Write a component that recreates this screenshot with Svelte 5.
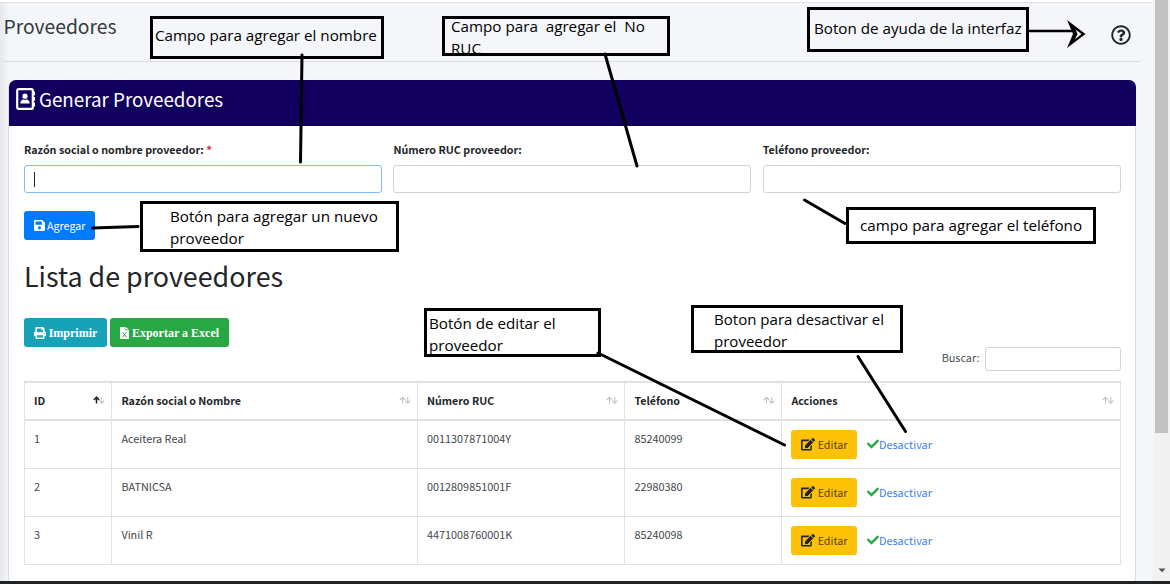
<script>
  const rows = [
    { id: 1, name: 'Aceitera Real', ruc: '0011307871004Y', phone: '85240099' },
    { id: 2, name: 'BATNICSA', ruc: '0012809851001F', phone: '22980380' },
    { id: 3, name: 'Vinil R', ruc: '4471008760001K', phone: '85240098' }
  ];
  const columns = ['ID', 'Razón social o Nombre', 'Número RUC', 'Teléfono', 'Acciones'];
</script>

<div class="window">
  <div class="page">
    <div class="topline"></div>
    <header class="title">
      <h1>Proveedores</h1>
      <svg class="help" viewBox="0 0 512 512"><path d="M256 8C119.043 8 8 119.083 8 256c0 136.997 111.043 248 248 248s248-111.003 248-248C504 119.083 392.957 8 256 8zm0 448c-110.532 0-200-89.431-200-200 0-110.495 89.472-200 200-200 110.491 0 200 89.471 200 200 0 110.53-89.431 200-200 200zm107.244-255.2c0 67.052-72.421 68.084-72.421 92.863V300c0 6.627-5.373 12-12 12h-45.647c-6.627 0-12-5.373-12-12v-8.659c0-35.745 27.1-50.034 47.579-61.516 17.561-9.845 28.324-16.541 28.324-29.579 0-17.246-21.999-28.693-39.784-28.693-23.189 0-33.894 10.977-48.942 29.969-4.057 5.12-11.46 6.071-16.666 2.124l-27.824-21.098c-5.107-3.872-6.251-11.066-2.644-16.363C184.846 131.491 214.94 112 261.794 112c49.071 0 101.45 38.304 101.45 88.8zM298 368c0 23.159-18.841 42-42 42s-42-18.841-42-42 18.841-42 42-42 42 18.841 42 42z" /></svg>
    </header>

    <section class="card">
      <div class="card-head">
        <svg class="book" viewBox="0 0 20 23">
          <rect x="1.2" y="1.2" width="15.6" height="19.6" rx="1.4" fill="none" stroke="#fff" stroke-width="2.2" />
          <circle cx="9" cy="8.2" r="2.6" fill="#fff" />
          <path d="M4.3 15.6c0-2.6 1.7-4 3.2-4 .9.5 2.1.5 3 0 1.500 0 3.200 1.400 3.200 4z" fill="#fff" />
          <path d="M17.500 3.500h1.500v3.800H17.500zM17.500 9h1.500v3.800H17.500zM17.500 14.600h1.500v3.800H17.500z" fill="#fff" />
        </svg>
        <span>Generar Proveedores</span>
      </div>

      <div class="card-body">
        <div class="fields">
          <div class="field">
            <label for="name">Razón social o nombre proveedor: <b>*</b></label>
            <div id="name" class="input active"><i></i></div>
          </div>
          <div class="field">
            <label for="ruc">Número RUC proveedor:</label>
            <div id="ruc" class="input"></div>
          </div>
          <div class="field">
            <label for="phone">Teléfono proveedor:</label>
            <div id="phone" class="input"></div>
          </div>
        </div>

        <button class="btn add">
          <svg width="11" height="13" viewBox="0 0 448 512"><path d="M433.941 129.941l-83.882-83.882A48 48 0 0 0 316.118 32H48C21.490 32 0 53.490 0 80v352c0 26.510 21.490 48 48 48h352c26.510 0 48-21.490 48-48V163.882a48 48 0 0 0-14.059-33.941zM224 416c-35.346 0-64-28.654-64-64 0-35.346 28.654-64 64-64s64 28.654 64 64c0 35.346-28.654 64-64 64zm96-304.520V212c0 6.627-5.373 12-12 12H76c-6.627 0-12-5.373-12-12V108c0-6.627 5.373-12 12-12h228.520c3.183 0 6.235 1.264 8.485 3.515l3.480 3.480A11.996 11.996 0 0 1 320 111.480z" /></svg>
          <span>Agregar</span>
        </button>

        <h2>Lista de proveedores</h2>

        <div class="exports">
          <button class="btn print">
            <svg width="12" height="12" viewBox="0 0 512 512"><path d="M448 192V77.250c0-8.490-3.370-16.620-9.370-22.630L393.370 9.370c-6-6-14.140-9.370-22.630-9.370H96C78.330 0 64 14.330 64 32v160c-35.350 0-64 28.650-64 64v112c0 8.840 7.160 16 16 16h48v96c0 17.670 14.330 32 32 32h320c17.670 0 32-14.330 32-32v-96h48c8.840 0 16-7.160 16-16V256c0-35.350-28.650-64-64-64zm-64 256H128v-96h256v96zm0-224H128V64h192v48c0 8.840 7.160 16 16 16h48v96zm48 72c-13.250 0-24-10.750-24-24 0-13.260 10.750-24 24-24s24 10.740 24 24c0 13.250-10.750 24-24 24z" /></svg>
            <span>Imprimir</span>
          </button>
          <button class="btn excel">
            <svg width="9" height="12" viewBox="0 0 9 12"><path d="M.6 0H5.500v3.200H9v8.200a.6.6 0 0 1-.6.6H.6a.6.6 0 0 1-.6-.6V.6A.6.6 0 0 1 .6 0zM6.200 0 9 2.600H6.200z" /><path d="M2.700 5.200l3.600 4.800M6.300 5.200L2.700 10" stroke="#28a745" stroke-width="1" /></svg>
            <span>Exportar a Excel</span>
          </button>
        </div>

        <div class="search">
          <span>Buscar:</span>
          <div class="searchbox"></div>
        </div>

        <div class="table">
          <div class="tr head">
            {#each columns as col, i}
              <div class="th">
                <span>{col}</span>
                <svg class:sorted={i === 0} width="12" height="9" viewBox="0 0 12 9" fill="none">
                  <path class="up" d="M3.500 7.500V1.200M.8 4L3.500 1.200 6.200 4" />
                  <path class="down" d="M8.700 1v6.300M6.200 4.700l2.500 2.600 2.600-2.600" />
                </svg>
              </div>
            {/each}
          </div>
          {#each rows as row}
            <div class="tr">
              <div class="td">{row.id}</div>
              <div class="td">{row.name}</div>
              <div class="td">{row.ruc}</div>
              <div class="td">{row.phone}</div>
              <div class="td actions">
                <button class="btn edit">
                  <svg width="14" height="12.500" viewBox="0 0 576 512"><path d="M402.600 83.200l90.200 90.200c3.800 3.800 3.800 10 0 13.800L274.400 405.600l-92.800 10.300c-12.400 1.400-22.900-9.100-21.500-21.500l10.300-92.800L388.800 83.200c3.800-3.800 10-3.800 13.800 0zm162-22.900l-48.800-48.800c-15.200-15.200-39.900-15.200-55.200 0l-35.400 35.400c-3.800 3.800-3.800 10 0 13.800l90.200 90.200c3.800 3.800 10 3.800 13.800 0l35.400-35.400c15.200-15.300 15.200-40 0-55.200zM384 346.200V448H64V128h229.800c3.200 0 6.200-1.300 8.500-3.500l40-40c7.600-7.600 2.200-20.500-8.500-20.500H48C21.500 64 0 85.500 0 112v352c0 26.500 21.500 48 48 48h352c26.500 0 48-21.500 48-48V306.200c0-10.700-12.900-16-20.500-8.500l-40 40c-2.200 2.300-3.500 5.300-3.500 8.500z" /></svg>
                  <span>Editar</span>
                </button>
                <span class="off">
                  <svg width="12" height="12" viewBox="0 0 512 512"><path d="M173.898 439.404l-166.400-166.400c-9.997-9.997-9.997-26.206 0-36.204l36.203-36.204c9.997-9.998 26.207-9.998 36.204 0L192 312.690 432.095 72.596c9.997-9.997 26.207-9.997 36.204 0l36.203 36.204c9.997 9.997 9.997 26.206 0 36.204l-294.400 294.401c-9.998 9.997-26.207 9.997-36.204-.001z" /></svg>
                  <span>Desactivar</span>
                </span>
              </div>
            </div>
          {/each}
        </div>
      </div>
    </section>
  </div>

  <div class="scroll">
    <div class="thumb"></div>
    <svg width="8" height="5" viewBox="0 0 8 5"><path d="M.5.500h7L4 4.300z" fill="#505050" /></svg>
  </div>
  <div class="bottom"></div>

  <svg class="lines" viewBox="0 0 1170 584" fill="none" stroke="#000" stroke-width="3" stroke-linecap="round">
    <path d="M302 55L300.500 162" />
    <path d="M605 54L637 166" />
    <path d="M1029 31H1072" stroke-width="2.500" />
    <path d="M1067 20L1085.500 34 1067 48 1073 34z M1075.500 29.500L1081.500 34 1075 39.500 1077.500 34z" fill="#000" fill-rule="evenodd" stroke="none" />
    <path d="M92.500 228L138 226.500" />
    <path d="M804.500 200L845 223.500" />
    <path d="M598 353L784.500 445" />
    <path d="M858 356.500L905.500 431.500" />
  </svg>
  <div class="note n1">Campo para agregar el nombre</div>
  <div class="note n2"><p>Campo para&nbsp; agregar el&nbsp; No<br />RUC</p></div>
  <div class="note n3">Boton de ayuda de la interfaz</div>
  <div class="note n4">Botón para agregar un nuevo<br />proveedor</div>
  <div class="note n5">campo para agregar el teléfono</div>
  <div class="note n6">Botón de editar el<br />proveedor</div>
  <div class="note n7">Boton para desactivar el<br />proveedor</div>
</div>

<style>
  :global(body) { background: #f4f6f9; overflow: hidden; }
  .window, .window * { box-sizing: border-box; }
  .window {
    position: relative;
    display: grid;
    grid-template: 581px 3px / 1153px 17px;
    width: 1170px;
    height: 584px;
    overflow: hidden;
    color: #212529;
    font-family: "Noto Sans CJK SC", "Source Sans Pro", sans-serif;
    font-size: 10.850px;
    white-space: nowrap;
  }
  svg { flex: none; display: block; }
  .page { display: flex; flex-direction: column; overflow: hidden; background: linear-gradient(90deg, #e6e8eb, #f4f6f9 10px); }
  .topline { height: 3px; background: #fff; border-bottom: 1px solid #dee2e6; }
  .title { display: flex; justify-content: space-between; height: 59px; margin: 0 12px 0 2px; padding: 0 10px 0 1.500px; border-bottom: 1px solid #dadde1; }
  h1 { margin: 10px 0 0; font-size: 19.300px; line-height: 26px; font-weight: 400; color: #343a40; }
  .help { width: 20px; height: 20px; margin-top: 21.500px; fill: #212529; }
  .card { flex: 1; width: 1128px; margin: 18px 0 0 8px; border: solid #d9dce0; border-width: 0 1px; border-radius: 8px 8px 0 0; background: #fff; }
  .card-head { display: flex; height: 46px; margin: 0 -1px 0 0; padding: 8px 0 0 7px; border-radius: 7px 7px 0 0; background: #12005e; color: #fff; }
  .book { width: 20px; height: 23px; margin-right: 3px; }
  .card-head span { margin-top: -1px; font-size: 18.800px; line-height: 24px; font-weight: 400; }
  .card-body { padding: 16px 15px 0; }
  .fields { display: grid; grid-template-columns: repeat(3, 358px); column-gap: 11.400px; }
  .field label { display: block; height: 23px; font-size: 10.730px; line-height: 16px; font-weight: 700; }
  .field b { color: #dc3545; }
  .input { width: 358px; height: 28px; padding: 6px 0 0 9px; border: 1px solid #ced4da; border-radius: 3px; background: #fff; }
  .active { border-color: #80bdff; }
  .input i { display: block; width: 1px; height: 15px; background: #212529; }
  .btn { display: flex; align-items: center; justify-content: center; height: 29px; padding: 0; border: 0; border-radius: 3px; color: #fff; fill: currentColor; font: 10.700px/16px "Noto Sans CJK SC", sans-serif; }
  .add { width: 71px; margin-top: 18px; gap: 2.500px; background: #007bff; }
  .add span, .edit span { margin-top: 1px; }
  h2 { height: 40px; margin: 16px 0 0; font-size: 26.850px; line-height: 40px; font-weight: 400; }
  .exports { display: flex; gap: 3px; margin-top: 22px; }
  .exports .btn { font: bold 12px/16px "Liberation Serif", serif; gap: 3px; }
  .print { width: 83px; background: #17a2b8; }
  .excel { width: 119px; background: #28a745; }
  .search { display: flex; justify-content: flex-end; gap: 5.500px; margin-right: -1px; line-height: 20px; color: #495057; }
  .searchbox { width: 136px; height: 24px; border: 1px solid #ced4da; border-radius: 3px; }
  .table { width: 1097px; margin-top: 10px; border: 1px solid #dee2e6; border-bottom: 0; }
  .tr { display: grid; grid-template-columns: 87px 306px 207px 157px 338px; height: 48px; border-bottom: 1px solid #dee2e6; }
  .head { height: 39px; border-top: 1px solid #dee2e6; border-bottom-width: 2px; }
  .th, .td { padding-left: 9.400px; border-right: 1px solid #dee2e6; }
  .th:first-child, .td:first-child, .th:nth-child(3), .td:nth-child(3) { padding-left: 9px; }
  .th:last-child, .td:last-child { border-right: 0; }
  .th { display: flex; justify-content: space-between; padding-top: 10px; padding-right: 6.500px; font-size: 10.700px; font-weight: 700; line-height: 16px; }
  .th svg { margin-top: 3px; stroke: #bfc2c5; stroke-width: 1.100; }
  .sorted .up { stroke: #212529; stroke-width: 1.500; }
  .td { padding-top: 9px; line-height: 16px; color: #42474c; }
  .actions { display: flex; align-items: flex-start; gap: 10px; padding-left: 9px; }
  .edit { width: 66px; gap: 3px; background: #ffc107; color: #212529; }
  .edit span { color: #55470f; }
  .off { display: flex; align-items: center; height: 29px; color: #3f7fe8; }
  .off span { margin-top: -1px; }
  .off svg { fill: #28a745; margin-top: -1px; }
  .scroll { display: flex; flex-direction: column; align-items: center; justify-content: space-between; padding-bottom: 8px; background: #f1f1f1; }
  .thumb { width: 13px; height: 433px; background: #c1c1c1; }
  .bottom { grid-column: 1 / 3; background: #202326; }
  .lines { position: absolute; inset: 0; width: 1170px; height: 584px; }
  .note { position: absolute; border: 3px solid #000; color: #000; font: 15.200px/22px "Open Sans", sans-serif; }
  .n1 { left: 150px; top: 16px; width: 234px; height: 43px; padding: 5px 0 0 2px; }
  .n2 { left: 442px; top: 16px; width: 228px; height: 40px; padding-left: 6px; }
  .n2 p { margin: -4px 0 0; }
  .n3 { left: 807px; top: 7px; width: 222px; height: 45px; padding: 7px 0 0 4px; }
  .n4 { left: 140px; top: 201px; width: 259px; height: 51px; padding: 1px 0 0 27px; }
  .n5 { left: 846px; top: 207px; width: 250px; height: 37px; padding: 4px 0 0 11px; }
  .n6 { left: 424px; top: 308px; width: 177px; height: 49px; padding: 1px 0 0 2px; }
  .n7 { left: 691px; top: 305px; width: 212px; height: 48px; padding: 0 0 0 20px; font-size: 15.050px; }
</style>
